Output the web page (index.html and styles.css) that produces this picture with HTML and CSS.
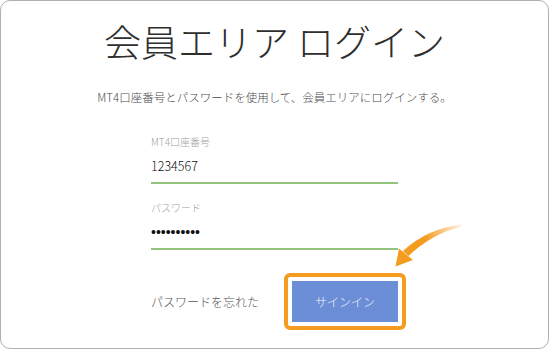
FILE: index.html
```html
<!DOCTYPE html>
<html lang="ja">
<head>
<meta charset="utf-8">
<link rel="stylesheet" href="styles.css">
</head>
<body>
<div class="frame">
  <h1 class="title">会員エリア ログイン</h1>
  <p class="lead">MT4口座番号とパスワードを使用して、会員エリアにログインする。</p>
  <div class="form">
    <div class="field">
      <div class="label">MT4口座番号</div>
      <div class="value">1234567</div>
    </div>
    <div class="field field-second">
      <div class="label">パスワード</div>
      <div class="value dots">••••••••••</div>
    </div>
    <div class="actions">
      <span class="forgot">パスワードを忘れた</span>
      <span class="highlight"><span class="button">サインイン</span></span>
    </div>
  </div>
  <svg class="arrow" width="549" height="349" viewBox="0 0 549 349">
    <defs>
      <linearGradient id="g" gradientUnits="userSpaceOnUse" x1="462" y1="225" x2="425" y2="238">
        <stop offset="0" stop-color="#f39c1f" stop-opacity="0.1"/>
        <stop offset="1" stop-color="#f39c1f" stop-opacity="1"/>
      </linearGradient>
    </defs>
    <path d="M462,224.5 Q428,228 403,251 L408.5,256 Q432,233.5 462,226.5 Z" fill="url(#g)"/>
    <path d="M395.5,266.5 L399,248.5 L413,260 Z" fill="#f39c1f"/>
  </svg>
</div>
</body>
</html>
```

FILE: styles.css
```css
html, body {
  margin: 0;
  padding: 0;
  background: #fff;
}
body {
  font-family: "Noto Sans CJK JP", "Noto Sans", sans-serif;
}
.frame {
  position: relative;
  box-sizing: border-box;
  width: 549px;
  height: 349px;
  border: 1px solid #b0b0b0;
  border-radius: 10px;
  display: flex;
  flex-direction: column;
  align-items: center;
  padding-top: 18px;
}
.title {
  margin: 0;
  font-size: 37px;
  line-height: 44px;
  font-weight: 300;
  color: #2e2e2e;
}
.lead {
  margin: 26px 0 0;
  font-size: 11.5px;
  line-height: 16px;
  font-weight: 300;
  color: #4a4a4a;
}
.form {
  width: 247px;
  margin-top: 30px;
  display: flex;
  flex-direction: column;
}
.field {
  border-bottom: 2px solid #93c47d;
  padding-bottom: 7px;
}
.field-second {
  margin-top: 17px;
}
.label {
  font-size: 10px;
  line-height: 14px;
  font-weight: 300;
  color: #a0a0a0;
}
.value {
  margin-top: 8px;
  font-size: 12.5px;
  line-height: 18px;
  font-weight: 300;
  color: #111;
}
.dots {
  font-family: "Liberation Sans", sans-serif;
  font-size: 14px;
  font-weight: 400;
}
.actions {
  margin-top: 23px;
  display: flex;
  align-items: center;
  justify-content: space-between;
}
.forgot {
  font-size: 12px;
  line-height: 18px;
  font-weight: 300;
  color: #555;
}
.highlight {
  display: flex;
  border: 4px solid #f39c1f;
  border-radius: 6px;
  padding: 4px;
  margin-right: -8px;
  background: #fff;
}
.button {
  width: 106px;
  height: 41px;
  background: #6b8ed6;
  color: #f2f4fb;
  font-size: 12px;
  font-weight: 300;
  display: flex;
  align-items: center;
  justify-content: center;
}
.arrow {
  position: absolute;
  left: -1px;
  top: -1px;
  pointer-events: none;
}
```
